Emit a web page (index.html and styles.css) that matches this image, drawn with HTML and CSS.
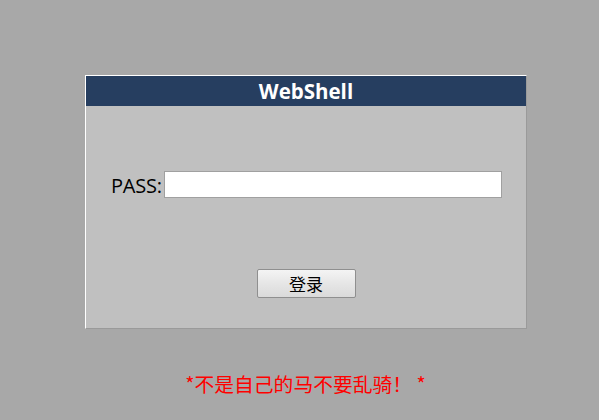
FILE: index.html
```html
<!DOCTYPE html>
<html>
<head>
<meta charset="utf-8">
<link rel="stylesheet" href="styles.css">
</head>
<body>
<div class="page">
  <div class="box">
    <div class="head">WebShell</div>
    <div class="content">
      <div class="row">
        <label class="lbl">PASS:</label><input class="pass" type="password">
      </div>
      <div class="btnrow">
        <button class="btn">登录</button>
      </div>
    </div>
  </div>
  <div class="warn">*不是自己的马不要乱骑！ *</div>
</div>
</body>
</html>
```

FILE: styles.css
```css
html, body {
  margin: 0;
  padding: 0;
  background: #a8a8a8;
}
body {
  width: 599px;
  height: 420px;
  overflow: hidden;
  font-family: "Open Sans", "Noto Sans CJK SC", sans-serif;
}
.page {
  padding-top: 75px;
  padding-left: 85px;
}
.box {
  width: 440px;
  height: 252px;
  background: #c0c0c0;
  border-top: 1px solid #ffffff;
  border-left: 1px solid #ffffff;
  border-right: 1px solid #9a9a9a;
  border-bottom: 1px solid #9a9a9a;
}
.head {
  height: 30px;
  background: #263e60;
  color: #ffffff;
  font-weight: bold;
  font-size: 20.5px;
  line-height: 31px;
  text-align: center;
}
.content {
  display: flex;
  flex-direction: column;
}
.row {
  display: flex;
  align-items: center;
  padding-left: 25px;
  margin-top: 65px;
  height: 27px;
}
.lbl {
  font-size: 20px;
  color: #000;
  font-family: "Open Sans", sans-serif;
  width: 53px;
  white-space: nowrap;
  letter-spacing: -0.2px;
  line-height: 27px;
  margin-top: 1px;
}
.pass {
  box-sizing: border-box;
  width: 338px;
  height: 27px;
  margin: 0;
  border: 1px solid #a0a0a0;
  background: #fff;
  outline: none;
  padding: 0 3px;
}
.btnrow {
  display: flex;
  justify-content: center;
  margin-top: 71px;
}
.btn {
  box-sizing: border-box;
  width: 99px;
  height: 29px;
  margin: 0;
  border: 1px solid #8f8f8f;
  border-radius: 2px;
  background: linear-gradient(#f4f4f4, #e6e6e6 50%, #dadada);
  font-family: "Noto Sans CJK SC", sans-serif;
  font-size: 17px;
  color: #000;
  padding: 0;
  line-height: 27px;
}
.warn {
  margin-top: 43px;
  margin-left: -85px;
  padding-left: 12px;
  text-align: center;
  color: #ff0000;
  font-size: 19.8px;
  font-family: "Noto Sans CJK SC", sans-serif;
  line-height: 24px;
}
```
